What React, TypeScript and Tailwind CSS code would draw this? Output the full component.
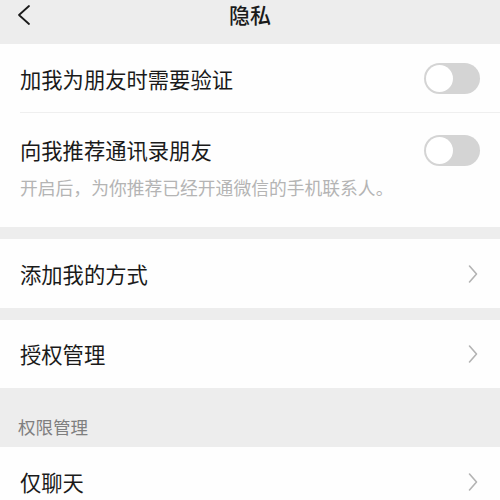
import React from "react";

const font = { fontFamily: '"Noto Sans CJK SC", "Noto Sans", sans-serif' };

function Toggle() {
    return (
        <div className="w-[56px] h-[31px] rounded-full bg-[#d4d4d4] p-[2px] flex items-center">
            <div className="w-[27px] h-[27px] rounded-full bg-white" />
        </div>
    );
}

function Chevron() {
    return (
        <svg width="10" height="20" viewBox="0 0 10 20" fill="none">
            <path d="M1.5 2 L8.5 10 L1.5 18" stroke="#b3b3b3" strokeWidth="1.6" strokeLinecap="round" strokeLinejoin="round" />
        </svg>
    );
}

function LinkRow({ label, height }: { label: string; height: string }) {
    return (
        <div className={`bg-[#fefefe] flex items-center justify-between pl-[20px] pr-[22px] ${height}`}>
            <span className="text-[21.3px] text-[#1a1a1a]">{label}</span>
            <Chevron />
        </div>
    );
}

export default function App() {
    return (
        <div className="w-[500px] h-[500px] overflow-hidden bg-[#ededed]" style={font}>
            {/* Header */}
            <div className="h-[44px] relative flex items-center justify-center">
                <svg className="absolute left-[16px] top-[4px]" width="16" height="22" viewBox="0 0 16 22" fill="none">
                    <path d="M13 2 L3 11 L13 20" stroke="#1a1a1a" strokeWidth="1.8" strokeLinecap="round" strokeLinejoin="round" />
                </svg>
                <span className="text-[21px] font-medium text-[#1a1a1a] -mt-[14px]">隐私</span>
            </div>

            {/* Section 1 */}
            <div className="bg-[#fefefe]">
                <div className="h-[69px] flex items-center justify-between pl-[20px] pr-[20px] relative">
                    <span className="text-[21.3px] text-[#1a1a1a]">加我为朋友时需要验证</span>
                    <Toggle />
                    <div className="absolute left-[20px] right-0 bottom-0 h-px bg-[#efefef]" />
                </div>
                <div className="pt-[23px] pb-[29px] pl-[20px] pr-[20px]">
                    <div className="flex items-center justify-between h-[28px]">
                        <span className="text-[21.3px] text-[#1a1a1a]">向我推荐通讯录朋友</span>
                        <Toggle />
                    </div>
                    <div className="mt-[12px] leading-[22px] text-[17.8px] text-[#b4b4b4]">
                        开启后，为你推荐已经开通微信的手机联系人。
                    </div>
                </div>
            </div>

            <div className="h-[12px]" />
            <LinkRow label="添加我的方式" height="h-[69px]" />
            <div className="h-[12px]" />
            <LinkRow label="授权管理" height="h-[68px]" />

            <div className="h-[59px] flex items-end pl-[18px] pb-[8px]">
                <span className="text-[17.5px] leading-[24px] text-[#7f7f7f]">权限管理</span>
            </div>
            <LinkRow label="仅聊天" height="h-[70px]" />
        </div>
    );
}
